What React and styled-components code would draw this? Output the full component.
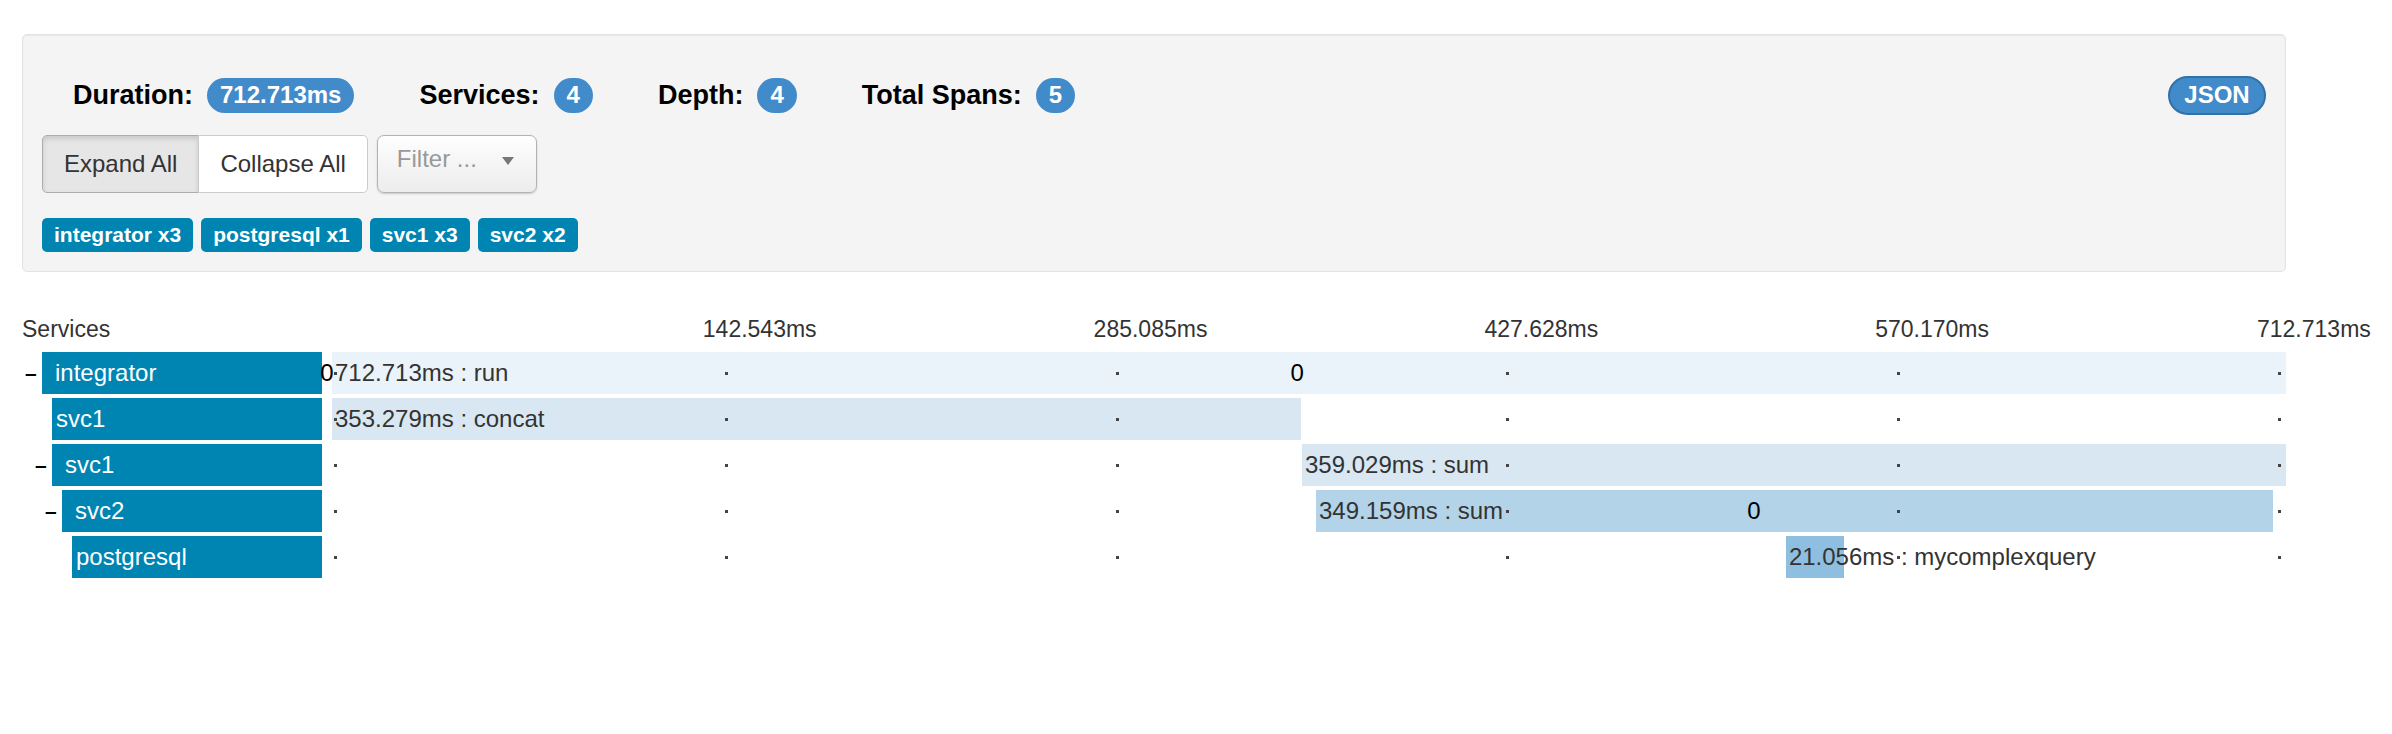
import React from 'react'
import styled, { createGlobalStyle } from 'styled-components'

const TOTAL = 712.713

const spans = [
  { service: 'integrator', name: 'run', start: 0, dur: 712.713, depth: 0, parent: true },
  { service: 'svc1', name: 'concat', start: 0, dur: 353.279, depth: 1, parent: false },
  { service: 'svc1', name: 'sum', start: 353.8, dur: 359.029, depth: 1, parent: true },
  { service: 'svc2', name: 'sum', start: 358.9, dur: 349.159, depth: 2, parent: true },
  { service: 'postgresql', name: 'mycomplexquery', start: 530.3, dur: 21.056, depth: 3, parent: false },
]

// annotation markers, as % of the timeline
const markers = { 0: [-0.26, 49.39], 3: [72.77] }

const ticks = ['142.543ms', '285.085ms', '427.628ms', '570.170ms', '712.713ms']
const tags = ['integrator x3', 'postgresql x1', 'svc1 x3', 'svc2 x2']

const barColors = ['#eaf2fa', '#d8e7f2', '#b3d3e8', '#8fbfe0']

const GlobalStyle = createGlobalStyle`
body{
    margin:0;
    background:#fff;
    font-family:"Liberation Sans", Arial, Helvetica, sans-serif;
    color:#333;
}
*{
    box-sizing:border-box;
}
`

const Page = styled.div`
width:2264px;
margin-left:22px;
padding-top:34px;
`

const Well = styled.div`
background:#f4f4f4;
border:1px solid #e3e3e3;
border-radius:5px;
padding:19px;
box-shadow:inset 0 1px 1px rgba(0,0,0,.05);
margin-bottom:39px;
`

const StatsRow = styled.div`
display:flex;
align-items:center;
height:40px;
margin-top:21px;
padding-left:31px;
`

const Stat = styled.div`
display:flex;
align-items:center;
margin-right:65px;
font-size:27px;
font-weight:bold;
color:#000;
`

const Badge = styled.span`
display:inline-flex;
align-items:center;
justify-content:center;
height:35px;
min-width:38px;
padding:0 13px;
margin-left:14px;
border-radius:18px;
background:#428bca;
color:#fff;
font-size:24px;
font-weight:bold;
`

const JsonButton = styled.button`
margin-left:auto;
height:39px;
width:98px;
border:2px solid #3071a9;
border-radius:20px;
background:#428bca;
color:#fff;
font-family:inherit;
font-size:24px;
font-weight:bold;
padding:0;
`

const Controls = styled.div`
display:flex;
gap:9px;
margin-top:20px;
`

const ButtonGroup = styled.div`
display:flex;
`

const GroupButton = styled.button`
height:58px;
padding:0 21px;
font-family:inherit;
font-size:24px;
color:#333;
background:${p => (p.$active ? '#e6e6e6' : '#fff')};
border:1px solid ${p => (p.$active ? '#adadad' : '#ccc')};
box-shadow:${p => (p.$active ? 'inset 0 3px 5px rgba(0,0,0,.125)' : 'none')};
border-radius:5px 0 0 5px;

& + &{
    margin-left:-1px;
    border-radius:0 5px 5px 0;
}
`

const FilterSelect = styled.div`
width:160px;
height:58px;
display:flex;
align-items:center;
justify-content:space-between;
padding:0 22px 10px 19px;
border:1px solid #b3b3b3;
border-radius:7px;
background:linear-gradient(#fefefe, #ececec);
box-shadow:0 1px 2px rgba(0,0,0,.18);
color:#999;
font-size:24px;
`

const Caret = styled.span`
width:0;
height:0;
border-left:6px solid transparent;
border-right:6px solid transparent;
border-top:8px solid #777;
margin-top:4px;
`

const TagRow = styled.div`
display:flex;
gap:8px;
margin-top:25px;
`

const Tag = styled.span`
display:inline-flex;
align-items:center;
height:34px;
padding:0 12px;
border-radius:5px;
background:#0085b3;
color:#fff;
font-size:21px;
font-weight:bold;
`

const HeaderRow = styled.div`
display:flex;
height:36px;
margin-bottom:5px;
font-size:23px;
color:#333;
`

const HeaderLabel = styled.div`
width:300px;
display:flex;
align-items:center;
`

const Axis = styled.div`
position:relative;
flex:1;
margin-left:10px;
`

const TickLabel = styled.span`
position:absolute;
top:50%;
transform:translateY(-50%);
white-space:nowrap;
`

const Row = styled.div`
display:flex;
height:42px;
margin-bottom:4px;
`

const LabelCell = styled.div`
width:300px;
display:flex;
padding-left:${p => p.$depth * 10}px;
`

const Toggle = styled.span`
width:20px;
flex:none;
display:flex;
align-items:center;
padding-left:3px;
font-size:21px;
font-weight:bold;
color:#000;
`

const ServiceBox = styled.div`
flex:1;
display:flex;
align-items:center;
padding-left:${p => (p.$parent ? 13 : 4)}px;
background:#0085b3;
color:#fff;
font-size:24px;
`

const Lane = styled.div`
position:relative;
flex:1;
margin-left:10px;
display:flex;
`

const Bar = styled.div`
height:100%;
display:flex;
align-items:center;
padding-left:3px;
background:${p => barColors[p.$depth]};
font-size:24px;
color:#333;
white-space:nowrap;
overflow:visible;
`

const Dot = styled.span`
position:absolute;
top:20px;
width:3px;
height:3px;
background:#444;
`

const Marker = styled.span`
position:absolute;
top:50%;
transform:translate(-50%, -50%);
font-size:24px;
line-height:1;
color:#000;
`

const fmt = v => v.toFixed(3)

const App = () => {
    return (
        <Page>
            <GlobalStyle />
            <Well>
                <StatsRow>
                    <Stat>Duration:<Badge>712.713ms</Badge></Stat>
                    <Stat>Services:<Badge>4</Badge></Stat>
                    <Stat>Depth:<Badge>4</Badge></Stat>
                    <Stat>Total Spans:<Badge>5</Badge></Stat>
                    <JsonButton>JSON</JsonButton>
                </StatsRow>
                <Controls>
                    <ButtonGroup>
                        <GroupButton $active>Expand All</GroupButton>
                        <GroupButton>Collapse All</GroupButton>
                    </ButtonGroup>
                    <FilterSelect>
                        <span>Filter ...</span>
                        <Caret />
                    </FilterSelect>
                </Controls>
                <TagRow>
                    {tags.map(t => <Tag key={t}>{t}</Tag>)}
                </TagRow>
            </Well>

            <HeaderRow>
                <HeaderLabel>Services</HeaderLabel>
                <Axis>
                    {ticks.map((t, i) => (
                        <TickLabel
                            key={t}
                            style={{ left: `calc(${(i + 1) * 20}% - ${i === 4 ? 29 : 20}px)` }}
                        >
                            {t}
                        </TickLabel>
                    ))}
                </Axis>
            </HeaderRow>

            {spans.map((s, i) => (
                <Row key={i}>
                    <LabelCell $depth={s.depth}>
                        <Toggle>{s.parent ? '–' : ''}</Toggle>
                        <ServiceBox $parent={s.parent}>{s.service}</ServiceBox>
                    </LabelCell>
                    <Lane>
                        <Bar
                            $depth={s.depth}
                            style={{
                                marginLeft: `${(s.start / TOTAL) * 100}%`,
                                width: `${(s.dur / TOTAL) * 100}%`,
                            }}
                        >
                            {fmt(s.dur)}ms : {s.name}
                        </Bar>
                        {[0, 1, 2, 3, 4, 5].map(k => (
                            <Dot
                                key={k}
                                style={{ left: k === 5 ? 'calc(100% - 8px)' : `calc(${k * 20}% + 2px)` }}
                            />
                        ))}
                        {(markers[i] || []).map(m => (
                            <Marker key={m} style={{ left: `${m}%` }}>0</Marker>
                        ))}
                    </Lane>
                </Row>
            ))}
        </Page>
    )
}

export default App
